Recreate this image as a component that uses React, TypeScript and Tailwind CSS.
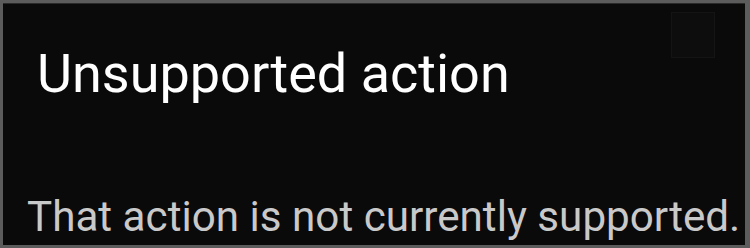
export default function App() {
  return (
    <div className="w-[750px] h-[248px] bg-[#5c5c5c] pt-[3px] pl-[3px] pr-[5px] pb-[3px]">
      <div
        className="relative w-full h-full bg-[#0b0a0b] border-t border-[#2a2a2a] overflow-hidden"
        style={{ fontFamily: "Roboto, 'Noto Sans', sans-serif" }}
      >
        {/* faint checkbox left over from the screen behind */}
        <div className="absolute right-[30px] top-[8px] w-[44px] h-[46px] border border-[#141414] bg-[#0d0d0d]" />

        <div className="relative flex flex-col h-full">
          <h1 className="pl-[34px] pt-[34px] text-[54px] leading-[72px] text-white">
            Unsupported action
          </h1>
          <p className="mt-auto pl-[24px] pb-[2px] text-[42.2px] leading-[52px] text-[#c9c9c9] whitespace-nowrap">
            That action is not currently supported.
          </p>
        </div>
      </div>
    </div>
  );
}
